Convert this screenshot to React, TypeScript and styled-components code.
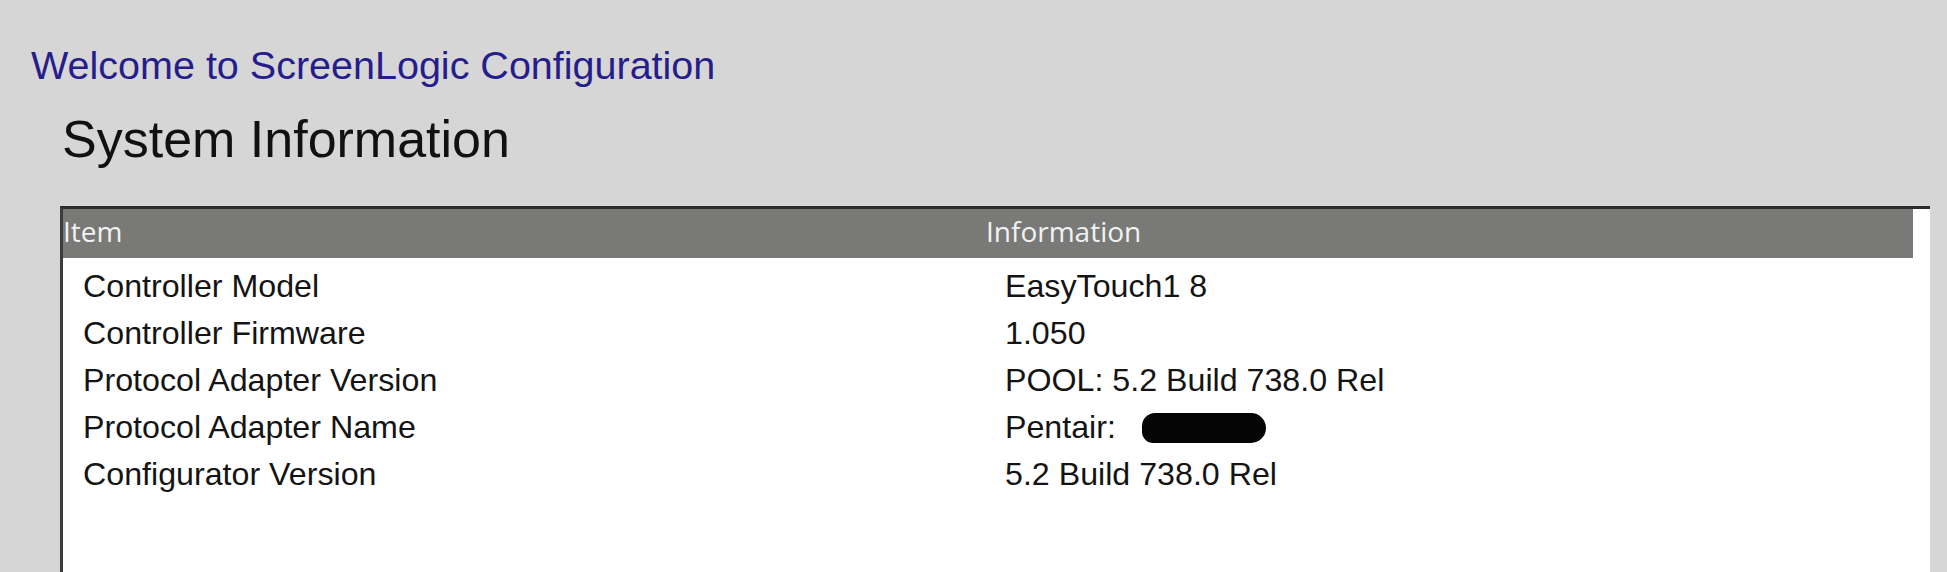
import React from "react";
import styled, {createGlobalStyle} from "styled-components";

const GlobalStyles = createGlobalStyle`
    html, body {
        margin: 0;
        padding: 0;
        background: #d6d6d6;
        overflow: hidden;
    }
`;

const Page = styled.div`
    display: flex;
    flex-direction: column;
    height: 572px;
    padding: 43px 0 0 31px;
    box-sizing: border-box;
    font-family: "Liberation Sans", Arial, sans-serif;
`;

const Welcome = styled.div`
    font-size: 39.5px;
    line-height: 44px;
    color: #261d8c;
`;

const Title = styled.h1`
    margin: 22px 0 0 31px;
    font-size: 52px;
    line-height: 60px;
    font-weight: normal;
    color: #111;
`;

const Table = styled.div`
    margin: 37px 0 0 29px;
    width: 1867px;
    flex: 1;
    background: #fff;
    border-top: 3px solid #2c2c2c;
    border-left: 3px solid #3c3c3c;
`;

const Grid = styled.div`
    display: grid;
    grid-template-columns: 923px 1fr;
`;

const HeaderRow = styled(Grid)`
    height: 49px;
    box-sizing: border-box;
    padding-bottom: 6px;
    margin-right: 17px;
    background: #797a77;
    align-items: center;
    font-family: "Open Sans", "Noto Sans", sans-serif;
    font-size: 28px;
    color: #f2f2f2;
`;

const HeaderCell = styled.div`
    padding-left: 0;
`;

const Body = styled.div`
    padding-top: 5px;
`;

const Row = styled(Grid)`
    height: 47px;
    align-items: center;
    font-size: 32.2px;
    color: #141414;
`;

const Cell = styled.div<{ $pad: number }>`
    padding-left: ${p => p.$pad}px;
    display: flex;
    align-items: center;
    white-space: nowrap;
`;

const Redaction = styled.span`
    display: inline-block;
    width: 124px;
    height: 30px;
    margin-left: 26px;
    margin-top: 1px;
    background: #050505;
    border-radius: 14px 16px 16px 12px;
`;

const rows: { item: string; info: React.ReactNode }[] = [
    {item: "Controller Model", info: "EasyTouch1 8"},
    {item: "Controller Firmware", info: "1.050"},
    {item: "Protocol Adapter Version", info: "POOL: 5.2 Build 738.0 Rel"},
    {item: "Protocol Adapter Name", info: <>Pentair:<Redaction/></>},
    {item: "Configurator Version", info: "5.2 Build 738.0 Rel"},
];

export default function App() {
    return (
        <>
            <GlobalStyles/>
            <Page>
                <Welcome>Welcome to ScreenLogic Configuration</Welcome>
                <Title>System Information</Title>
                <Table>
                    <HeaderRow>
                        <HeaderCell>Item</HeaderCell>
                        <HeaderCell>Information</HeaderCell>
                    </HeaderRow>
                    <Body>
                        {rows.map(r => (
                            <Row key={r.item}>
                                <Cell $pad={20}>{r.item}</Cell>
                                <Cell $pad={19}>{r.info}</Cell>
                            </Row>
                        ))}
                    </Body>
                </Table>
            </Page>
        </>
    );
}
